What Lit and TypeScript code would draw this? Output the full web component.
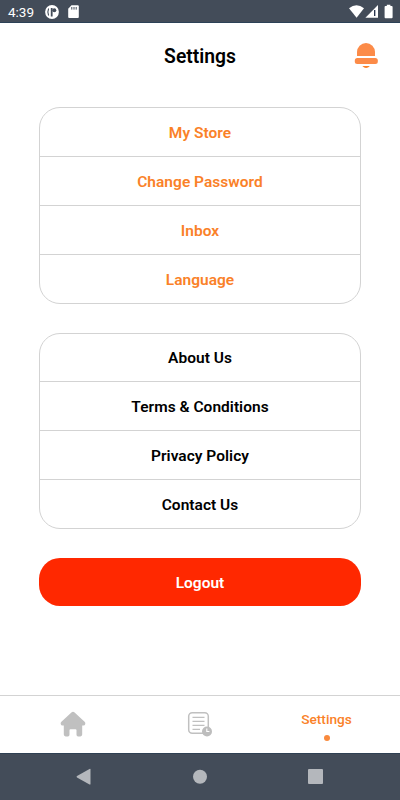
import { LitElement, html, css } from "lit";
import { customElement, property } from "lit/decorators.js";

@customElement("status-bar")
class StatusBar extends LitElement {
  static styles = css`
    :host {
      display: flex;
      align-items: center;
      box-sizing: border-box;
      height: 23px;
      background: #434c59;
      border-bottom: 1px solid #2c4257;
      color: #fff;
      padding-left: 8px;
    }
    .time {
      width: 37px;
      font-size: 13.5px;
      line-height: 22px;
      padding-top: 2px;
    }
    svg {
      display: block;
    }
    .spacer {
      flex: 1;
    }
  `;
  render() {
    return html`
      <span class="time">4:39</span>
      <svg width="36" height="22" viewBox="45 0 36 22">
        <circle cx="52" cy="12" r="6.9" fill="#fff" />
        <path d="M48.600 8.500q-1.500 3.500 0 7" stroke="#434c59" stroke-width="1.100" fill="none" />
        <path d="M51.700 8v8.500" stroke="#434c59" stroke-width="1.800" />
        <circle cx="54.300" cy="10.300" r="2" fill="#434c59" />
        <path d="M71.500 5.300h6.300a1 1 0 0 1 1 1v10.800a1 1 0 0 1-1 1h-8.600a1 1 0 0 1-1-1V8.700z" fill="#fff" />
        <path d="M71.800 7v2.600M74 7v2.600M76.200 7v2.600" stroke="#434c59" stroke-width="1" />
      </svg>
      <span class="spacer"></span>
      <svg width="52" height="22" viewBox="348 0 52 22">
        <path d="M349 8.200q7.500-6 15 0L356.600 17.700z" fill="#fff" />
        <path d="M378 5v12.700h-12.600z" fill="#fff" />
        <path d="M374.700 10v6" stroke="#1f2c46" stroke-width="1.300" />
        <path d="M386.800 4.700h3.600v1.300h1.300q.9 0 .9.900v10.400q0 .9-.9.900h-6.200q-.9 0-.9-.9V6.900q0-.9.9-.9h1.300z" fill="#fff" />
      </svg>
    `;
  }
}

@customElement("menu-card")
class MenuCard extends LitElement {
  @property({ attribute: false }) items: string[] = [];
  static styles = css`
    :host {
      display: grid;
      grid-template-rows: 1fr 49px 49px 49px;
      box-sizing: border-box;
      border: 1px solid #d3d3d3;
      border-radius: 21px;
      color: var(--item-color, #000);
    }
    .item {
      display: flex;
      align-items: center;
      justify-content: center;
      font-size: 15.49px;
      font-weight: 600;
      letter-spacing: 0.03px;
      line-height: 20px;
      padding-top: 1px;
    }
    .item + .item {
      border-top: 1px solid #d3d3d3;
    }
  `;
  render() {
    return this.items.map((label) => html`<div class="item">${label}</div>`);
  }
}

@customElement("app-root")
class AppRoot extends LitElement {
  static styles = css`
    :host {
      display: flex;
      flex-direction: column;
      height: 800px;
      background: #fff;
      font-family: Roboto, sans-serif;
      color: #000;
    }
    svg {
      display: block;
    }
    header {
      display: grid;
      grid-template-columns: 1fr auto 1fr;
      align-items: center;
      height: 66px;
    }
    h1 {
      grid-column: 2;
      margin: 0;
      font-size: 19.3px;
      line-height: 24px;
      font-weight: 600;
      padding-top: 2px;
    }
    .bell {
      justify-self: end;
      margin-right: 21px;
    }
    main {
      flex: 1;
      padding: 18px 39px 0;
    }
    .card {
      height: 197px;
      margin-bottom: 29px;
    }
    .account {
      --item-color: #fa8128;
    }
    .info {
      height: 196px;
    }
    .logout {
      display: block;
      width: 100%;
      height: 48px;
      border: 0;
      border-radius: 21px;
      padding: 2px 0 0;
      background: #ff2800;
      color: #fff;
      font: 600 15.49px/20px Roboto, sans-serif;
    }
    .tabs {
      box-sizing: border-box;
      height: 58px;
      border-top: 1px solid #d3d3d3;
      display: grid;
      grid-template-columns: 146px 107px 147px;
      justify-items: center;
    }
    .home,
    .orders {
      margin-top: 14px;
    }
    .active {
      display: flex;
      flex-direction: column;
      align-items: center;
      color: #fa8128;
      font-size: 13.7px;
      line-height: 18px;
      font-weight: 500;
      padding-top: 14px;
    }
    .dot {
      width: 6px;
      height: 6px;
      border-radius: 50%;
      background: #f98a3d;
      margin-top: 7px;
    }
    .system {
      box-sizing: border-box;
      height: 47px;
      background: #434c59;
      border-top: 1px solid #2f4053;
    }
  `;
  render() {
    return html`
      <status-bar></status-bar>
      <header>
        <h1>Settings</h1>
        <svg class="bell" width="26" height="30" viewBox="353 41 26 30">
          <path d="M357 56v-4a9 9 0 0 1 18 0v4z" fill="#fc8b48" />
          <rect x="354.800" y="58" width="23" height="6" rx="2.500" fill="#fc8b48" />
          <path d="M362.300 66h7.600q-3.800 4-7.600 0z" fill="#fa8128" />
        </svg>
      </header>
      <main>
        <menu-card class="card account" .items=${["My Store", "Change Password", "Inbox", "Language"]}></menu-card>
        <menu-card class="card info" .items=${["About Us", "Terms & Conditions", "Privacy Policy", "Contact Us"]}></menu-card>
        <button class="logout">Logout</button>
      </main>
      <nav class="tabs">
        <svg class="home" width="28" height="28" viewBox="59 710 28 28">
          <path
            d="M73 711.800q.9 0 1.600.6l10 9.300q1 1 .7 2.200-.4 1.500-1.800 1.500h-1.300v9.200q0 1.800-1.800 1.800h-2.300q-1.600 0-1.600-1.700v-4.500q0-1-1-1h-5q-1 0-1 1v4.500q0 1.700-1.600 1.700h-2.300q-1.800 0-1.800-1.800v-9.200h-1.300q-1.400 0-1.800-1.500-.3-1.200.7-2.200l10-9.300q.7-.6 1.600-.6z"
            fill="#c0c0c0"
          />
        </svg>
        <svg class="orders" width="28" height="28" viewBox="186 710 28 28">
          <rect x="188.700" y="712.700" width="19.600" height="20.600" rx="3.500" fill="none" stroke="#c0c0c0" stroke-width="1.500" />
          <path d="M192.500 717.300h12M192.500 721.300h12M192.500 725.300h12M192.500 729.300h7.500" stroke="#c0c0c0" stroke-width="1.300" />
          <circle cx="207" cy="731.500" r="5" fill="#bdbdbd" />
          <path d="M206.800 728.500v3h2.600" stroke="#fff" stroke-width="1.100" fill="none" />
        </svg>
        <div class="active">Settings<span class="dot"></span></div>
      </nav>
      <svg class="system" width="400" height="47" viewBox="0 754 400 46">
        <path d="M90.500 769.500v14.400q0 1-1 .5L77 777.500q-1-.8 0-1.500l12.500-7q1-.5 1 .5z" fill="#b4b7bc" />
        <circle cx="200" cy="776.700" r="7" fill="#b4b7bc" />
        <rect x="308" y="769" width="15" height="15" rx="1" fill="#b4b7bc" />
      </svg>
    `;
  }
}
